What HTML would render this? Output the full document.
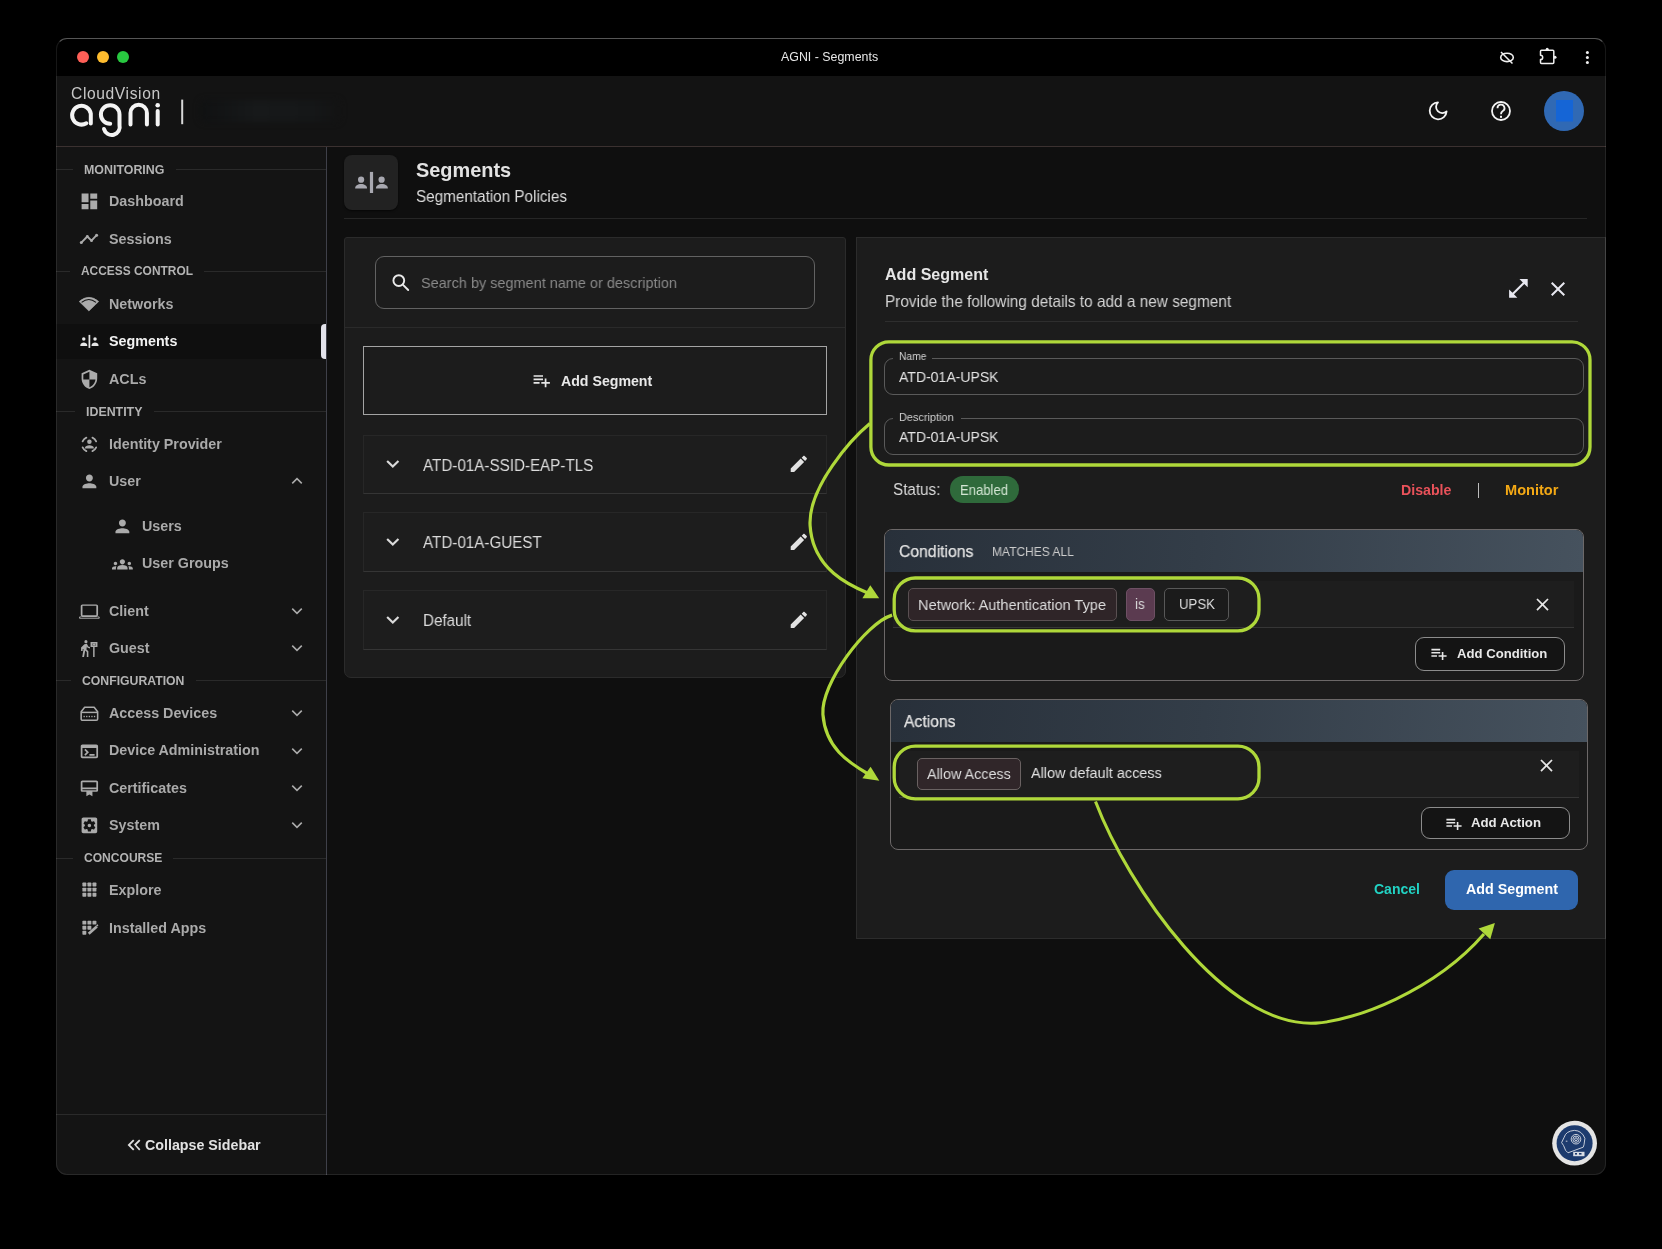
<!DOCTYPE html>
<html><head><meta charset="utf-8">
<style>
*{box-sizing:border-box;margin:0;padding:0}
html,body{width:1662px;height:1249px;overflow:hidden;background:#000;font-family:"Liberation Sans",sans-serif}
.a{position:absolute}
.t{position:absolute;white-space:nowrap;line-height:1;will-change:transform}
.b{font-weight:bold}
#clip{position:absolute;left:0;top:0;width:1662px;height:1249px;clip-path:inset(38px 56px 74px 56px round 11px);background:#0f0f0f}
svg{position:absolute;overflow:visible}
.nav{font-weight:bold;font-size:14.3px;color:#aaaaaa}
.sec{font-weight:bold;font-size:12.2px;color:#b4b4b4}
.ln{position:absolute;height:1px;background:#2a2a2a}
.ic{fill:#b4b4b4}
.chev{fill:none;stroke:#b4b4b4;stroke-width:1.6}
</style></head><body>
<div id="clip">
 <!-- title bar -->
 <div class="a" style="left:56px;top:38px;width:1550px;height:38px;background:#000"></div>
 <div class="a" style="left:77px;top:50.5px;width:12px;height:12px;border-radius:50%;background:#fe5f57"></div>
 <div class="a" style="left:97px;top:50.5px;width:12px;height:12px;border-radius:50%;background:#febc2e"></div>
 <div class="a" style="left:117px;top:50.5px;width:12px;height:12px;border-radius:50%;background:#28c840"></div>
 <div class="t" style="left:781px;top:51px;font-size:12.4px;color:#e8e8e8">AGNI - Segments</div>
 <!-- title bar icons -->
 <svg style="left:0;top:0" width="1" height="1">
  <g fill="none" stroke="#f0f0f0" stroke-width="1.3">
   <ellipse cx="1507" cy="57.4" rx="6.3" ry="4.2" stroke-width="1.6"/>
   <line x1="1501" y1="52" x2="1512.5" y2="63.5" stroke-width="1.5"/>
   <path d="M1541.5 50.3 H1552.8 Q1553.8 50.3 1553.8 51.3 V62.6 Q1553.8 63.6 1552.8 63.6 H1541.5 Q1540.5 63.6 1540.5 62.6 V59.6 A2.2 2.2 0 0 0 1540.5 55.2 V51.3 Q1540.5 50.3 1541.5 50.3 Z" stroke-width="1.5" stroke-linejoin="round"/><circle cx="1547.2" cy="49.2" r="1.5" fill="#f0f0f0" stroke="none"/><circle cx="1555" cy="57.2" r="1.5" fill="#f0f0f0" stroke="none"/>
  </g>
  <circle cx="1587.4" cy="52.6" r="1.5" fill="#f0f0f0"/><circle cx="1587.4" cy="57.5" r="1.5" fill="#f0f0f0"/><circle cx="1587.4" cy="62.5" r="1.5" fill="#f0f0f0"/>
 </svg>
 <!-- header -->
 <div class="a" style="left:56px;top:76px;width:1550px;height:71px;background:#131313;border-bottom:1px solid #3b3130"></div>
 <!-- blurred org name -->
 <div class="a" style="left:200px;top:100px;width:140px;height:22px;background:linear-gradient(90deg,#101112,#17191a 40%,#151718 80%,#131313);filter:blur(3px);border-radius:5px"></div>
 <!-- logo -->
 <div class="t" style="left:70.5px;top:85.8px;font-size:15.6px;color:#c8c8c8;letter-spacing:0.62px">CloudVision</div>
 <svg style="left:0;top:0" width="1" height="1">
  <g fill="none" stroke="#f4f4f4" stroke-width="4" stroke-linecap="round">
   <path d="M86.3 123.3 A9.4 9.4 0 1 1 90.8 113.6 L90.8 123.6"/>
   <path d="M119.5 114.5 A9.3 9.3 0 1 0 110.2 123.8 M119.5 114.5 V125 A8 8 0 0 1 104 129"/>
   <path d="M130.5 124.5 V113 A8.2 8.2 0 0 1 146.9 113 V124.5"/>
   <path d="M157.7 111 V124.5"/>
  </g>
  <circle cx="157.7" cy="105.2" r="2.3" fill="#f4f4f4"/>
  <rect x="181.2" y="99.6" width="2" height="24.6" fill="#d8d8d8"/>
 </svg>
 <!-- header right icons -->
 <svg style="left:0;top:0" width="1" height="1">
  <path d="M1438 102.4 A8.45 8.45 0 1 0 1446.6 111.4 A6.2 6.2 0 0 1 1438 102.4Z" fill="none" stroke="#f4f4f4" stroke-width="1.8" stroke-linejoin="round"/>
  <circle cx="1501" cy="111" r="9" fill="none" stroke="#f4f4f4" stroke-width="1.8"/>
  <path d="M1497.5 108.3 A3.5 3.5 0 1 1 1502.5 111.3 Q1501 112.3 1501 114.3" fill="none" stroke="#f4f4f4" stroke-width="1.8"/>
  <rect x="1500" y="115.8" width="2" height="2" fill="#f4f4f4"/>
  <circle cx="1564" cy="111" r="20" fill="#3069b4"/>
  <rect x="1556" y="100" width="17" height="21.5" fill="#1565d6"/>
 </svg>
 <!-- sidebar -->
 <div class="a" style="left:56px;top:147px;width:270px;height:1028px;background:#141414"></div>
 <div class="a" style="left:326px;top:147px;width:1.2px;height:1028px;background:#3f4049"></div>
<div class="ln" style="left:56px;top:168.9px;width:17.0px"></div>
<div class="ln" style="left:175.5px;top:168.9px;width:150.5px"></div>
<div class="t sec" style="left:83.6px;top:163.5px;font-size:12.41px">MONITORING</div>
<svg class="a" style="left:78.6px;top:191.2px" width="20.8" height="20.8" viewBox="0 0 24 24" fill="#ababab"><path d="M3 13h8V3H3v10zm0 8h8v-6H3v6zm10 0h8V11h-8v10zm0-18v6h8V3h-8z"/></svg>
<div class="t nav" style="left:108.7px;top:193.8px;color:#aaaaaa">Dashboard</div>
<svg class="a" style="left:0;top:0" width="1" height="1"><path d="M81.3 242.6 L87.3 236.5 L91.5 240.7 L96.6 235.2" fill="none" stroke="#ababab" stroke-width="1.9" stroke-linejoin="round"/><circle cx="81.3" cy="242.6" r="1.5" fill="#ababab"/><circle cx="87.3" cy="236.5" r="1.4" fill="#ababab"/><circle cx="91.5" cy="240.7" r="1.4" fill="#ababab"/><circle cx="96.6" cy="235.2" r="1.5" fill="#ababab"/></svg>
<div class="t nav" style="left:108.7px;top:231.8px;color:#aaaaaa">Sessions</div>
<div class="ln" style="left:56px;top:270.9px;width:14.0px"></div>
<div class="ln" style="left:204.0px;top:270.9px;width:122.0px"></div>
<div class="t sec" style="left:80.7px;top:265.7px;font-size:11.93px">ACCESS CONTROL</div>
<svg class="a" style="left:0;top:0" width="1" height="1"><path d="M79.2 301.5 Q88.9 293.2 98.7 301.5 L88.9 311 Z" fill="#ababab" stroke="#ababab" stroke-width="0.6" stroke-linejoin="round"/><path d="M81.6 302.4 Q88.8 296.6 96 302.4" fill="none" stroke="#141414" stroke-width="1.2"/></svg>
<div class="t nav" style="left:108.7px;top:296.9px;color:#aaaaaa">Networks</div>
<div class="a" style="left:56px;top:324px;width:270px;height:34.5px;background:#0f0f0f"></div>
<div class="a" style="left:320.8px;top:324px;width:5.5px;height:35px;background:#e2e2ea;border-radius:4px 0 0 4px"></div>
<svg class="a" style="left:78.6px;top:331.2px" width="20.8" height="20.8" viewBox="0 0 24 24" fill="#e6e6e6"><rect x="11" y="4.5" width="2" height="15"/><circle cx="5.5" cy="9.3" r="2"/><path d="M1.5 16.5c0-2 2.2-3.2 4-3.2s4 1.2 4 3.2v.8h-8z"/><circle cx="18.5" cy="9.3" r="2"/><path d="M14.5 16.5c0-2 2.2-3.2 4-3.2s4 1.2 4 3.2v.8h-8z"/></svg>
<div class="t nav" style="left:108.7px;top:333.9px;color:#f2f2f2">Segments</div>
<svg class="a" style="left:78.6px;top:369.4px" width="20.8" height="20.8" viewBox="0 0 24 24" fill="#ababab"><path d="M12 1L3 5v6c0 5.55 3.84 10.74 9 12 5.16-1.26 9-6.45 9-12V5l-9-4zm0 10.99h7c-.53 4.12-3.28 7.79-7 8.94V12H5V6.3l7-3.11v8.8z"/></svg>
<div class="t nav" style="left:108.7px;top:372.1px;color:#aaaaaa">ACLs</div>
<div class="ln" style="left:56px;top:411.1px;width:19.0px"></div>
<div class="ln" style="left:154.0px;top:411.1px;width:172.0px"></div>
<div class="t sec" style="left:86.0px;top:405.7px;font-size:12.4px">IDENTITY</div>
<svg class="a" style="left:78.6px;top:434.4px" width="20.8" height="20.8" viewBox="0 0 24 24" fill="#ababab"><circle cx="12" cy="8.85" r="2.6"/><path d="M6.8 16.2c0-2 3-3.2 5.2-3.2s5.2 1.2 5.2 3.2v.6H6.8z"/><path d="M4.2 8.5A8.6 8.6 0 0 1 8.5 4.2M15.5 4.2A8.6 8.6 0 0 1 19.8 8.5M19.8 15.5A8.6 8.6 0 0 1 15.5 19.8M8.5 19.8A8.6 8.6 0 0 1 4.2 15.5" fill="none" stroke="#ababab" stroke-width="2.1" stroke-linecap="round"/></svg>
<div class="t nav" style="left:108.7px;top:437.1px;color:#aaaaaa">Identity Provider</div>
<svg class="a" style="left:78.6px;top:471.2px" width="20.8" height="20.8" viewBox="0 0 24 24" fill="#ababab"><path d="M12 12c2.21 0 4-1.79 4-4s-1.79-4-4-4-4 1.79-4 4 1.79 4 4 4zm0 2c-2.67 0-8 1.34-8 4v2h16v-2c0-2.66-5.33-4-8-4z"/></svg>
<div class="t nav" style="left:108.7px;top:473.9px;color:#aaaaaa">User</div>
<svg class="a" style="left:286px;top:470.0px" width="22" height="22" viewBox="0 0 24 24"><path d="M6.8 14.6L12 9.4l5.2 5.2" fill="none" stroke="#ababab" stroke-width="1.7"/></svg>
<svg class="a" style="left:111.6px;top:516.2px" width="20.8" height="20.8" viewBox="0 0 24 24" fill="#ababab"><path d="M12 12c2.21 0 4-1.79 4-4s-1.79-4-4-4-4 1.79-4 4 1.79 4 4 4zm0 2c-2.67 0-8 1.34-8 4v2h16v-2c0-2.66-5.33-4-8-4z"/></svg>
<div class="t nav" style="left:141.6px;top:518.9px">Users</div>
<svg class="a" style="left:111.6px;top:553.7px" width="20.8" height="20.8" viewBox="0 0 24 24" fill="#ababab"><path d="M12 12.75c1.63 0 3.07.39 4.24.9 1.08.48 1.76 1.56 1.76 2.73V18H6v-1.61c0-1.18.68-2.26 1.76-2.73 1.17-.52 2.61-.91 4.24-.91zM4 13c1.1 0 2-.9 2-2s-.9-2-2-2-2 .9-2 2 .9 2 2 2zm1.13 1.1c-.37-.06-.74-.1-1.13-.1-.99 0-1.930.21-2.78.58C.48 14.9 0 15.62 0 16.43V18h4.5v-1.61c0-.83.23-1.61.63-2.290zM20 13c1.1 0 2-.9 2-2s-.9-2-2-2-2 .9-2 2 .9 2 2 2zm4 3.43c0-.81-.48-1.53-1.22-1.85-.85-.37-1.79-.58-2.78-.58-.39 0-.76.04-1.13.1.4.68.63 1.46.63 2.29V18H24v-1.57zM12 6c1.66 0 3 1.34 3 3s-1.34 3-3 3-3-1.340-3-3 1.34-3 3-3z"/></svg>
<div class="t nav" style="left:141.6px;top:556.4px">User Groups</div>
<svg class="a" style="left:78.6px;top:601.2px" width="20.8" height="20.8" viewBox="0 0 24 24" fill="#ababab"><path d="M20 18c1.1 0 2-.9 2-2V6c0-1.1-.9-2-2-2H4c-1.1 0-2 .9-2 2v10c0 1.1.9 2 2 2H1.5c-.8 0-1.5.7-1.5 1.2S.7 20.5 1.5 20.5h21c.8 0 1.5-.7 1.5-1.2S23.3 18 22.5 18H20zM4 5.5h16v11H4v-11z" fill-rule="evenodd"/><rect x="1.5" y="18.8" width="21" height="0.9" fill="#141414"/></svg>
<div class="t nav" style="left:108.7px;top:603.9px;color:#aaaaaa">Client</div>
<svg class="a" style="left:286px;top:600.0px" width="22" height="22" viewBox="0 0 24 24"><path d="M6.8 9.4L12 14.6l5.2-5.2" fill="none" stroke="#ababab" stroke-width="1.7"/></svg>
<svg class="a" style="left:78.6px;top:638.2px" width="20.8" height="20.8" viewBox="0 0 24 24" fill="#ababab"><circle cx="8" cy="4.2" r="1.8"/><path d="M6.2 7.2l2.9-.6 1.6 3.1 2 .8v1.7l-2.8-1-.8-1.3-.5 3.3 2.2 2.2V22H9v-5.7l-1.8-1.8-1.4 7.5H3.7l1.6-9.4-1.1.5V15H2.4v-4.1z"/><path d="M13.3 4.7h8v5.8h-3.3V22h-1.7V10.5h-3z"/><rect x="15.6" y="6.3" width="3.5" height="2.5" fill="#141414"/><rect x="16.7" y="5.6" width="1.3" height="3.9"/><rect x="15.9" y="6.9" width="2.9" height="1.3"/></svg>
<div class="t nav" style="left:108.7px;top:640.9px;color:#aaaaaa">Guest</div>
<svg class="a" style="left:286px;top:637.0px" width="22" height="22" viewBox="0 0 24 24"><path d="M6.8 9.4L12 14.6l5.2-5.2" fill="none" stroke="#ababab" stroke-width="1.7"/></svg>
<div class="ln" style="left:56px;top:680.1px;width:14.6px"></div>
<div class="ln" style="left:196.0px;top:680.1px;width:130.0px"></div>
<div class="t sec" style="left:81.8px;top:674.8px;font-size:12.24px">CONFIGURATION</div>
<svg class="a" style="left:78.6px;top:703.3px" width="20.8" height="20.8" viewBox="0 0 24 24" fill="#ababab"><path d="M6.5 5h11l4 5v8.5c0 .8-.7 1.5-1.5 1.5H4c-.8 0-1.5-.7-1.5-1.5V10z" fill="none" stroke="#ababab" stroke-width="1.8" stroke-linejoin="round"/><rect x="2.5" y="10" width="19" height="1.7"/><rect x="5.2" y="14.8" width="1.5" height="1.6"/><rect x="8.2" y="14.8" width="1.5" height="1.6"/><rect x="11.2" y="14.8" width="1.5" height="1.6"/><rect x="14.2" y="14.8" width="1.5" height="1.6"/><rect x="17.2" y="14.8" width="1.5" height="1.6"/></svg>
<div class="t nav" style="left:108.7px;top:706.0px;color:#aaaaaa">Access Devices</div>
<svg class="a" style="left:286px;top:702.1px" width="22" height="22" viewBox="0 0 24 24"><path d="M6.8 9.4L12 14.6l5.2-5.2" fill="none" stroke="#ababab" stroke-width="1.7"/></svg>
<svg class="a" style="left:78.6px;top:740.7px" width="20.8" height="20.8" viewBox="0 0 24 24" fill="#ababab"><path d="M20 4H4c-1.11 0-2 .9-2 2v12c0 1.1.89 2 2 2h16c1.1 0 2-.9 2-2V6c0-1.1-.89-2-2-2zm0 14H4V8h16v10zm-2-1h-6v-2h6v2zM7.5 17l-1.41-1.41L8.67 13l-2.59-2.59L7.5 9l4 4-4 4z"/></svg>
<div class="t nav" style="left:108.7px;top:743.4px;color:#aaaaaa">Device Administration</div>
<svg class="a" style="left:286px;top:739.5px" width="22" height="22" viewBox="0 0 24 24"><path d="M6.8 9.4L12 14.6l5.2-5.2" fill="none" stroke="#ababab" stroke-width="1.7"/></svg>
<svg class="a" style="left:78.6px;top:778.2px" width="20.8" height="20.8" viewBox="0 0 24 24" fill="#ababab"><path d="M4 3h16c1.1 0 2 .9 2 2v9c0 1.1-.9 2-2 2h-4.5v5l-3.5-2-3.5 2v-5H4c-1.1 0-2-.9-2-2V5c0-1.1.9-2 2-2zm0 2v6h16V5H4zm0 8v1h16v-1H4z" fill-rule="evenodd"/></svg>
<div class="t nav" style="left:108.7px;top:780.9px;color:#aaaaaa">Certificates</div>
<svg class="a" style="left:286px;top:777.0px" width="22" height="22" viewBox="0 0 24 24"><path d="M6.8 9.4L12 14.6l5.2-5.2" fill="none" stroke="#ababab" stroke-width="1.7"/></svg>
<svg class="a" style="left:78.6px;top:815.4px" width="20.8" height="20.8" viewBox="0 0 24 24" fill="#ababab"><path d="M12 10c-1.1 0-2 .9-2 2s.9 2 2 2 2-.9 2-2-.9-2-2-2zm7-7H5c-1.11 0-2 .9-2 2v14c0 1.1.89 2 2 2h14c1.11 0 2-.9 2-2V5c0-1.1-.89-2-2-2zm-1.75 9c0 .23-.02.46-.05.68l1.48 1.16c.13.11.17.3.08.45l-1.4 2.42c-.09.15-.27.21-.43.15l-1.74-.7c-.36.28-.76.51-1.18.69l-.26 1.85c-.03.17-.18.3-.35.3h-2.8c-.17 0-.32-.13-.35-.29l-.26-1.85c-.43-.18-.82-.41-1.18-.69l-1.74.7c-.16.06-.34 0-.43-.15l-1.4-2.42c-.09-.15-.05-.34.08-.45l1.48-1.16c-.03-.23-.05-.46-.05-.69 0-.23.02-.46.05-.68l-1.48-1.16c-.13-.11-.17-.3-.08-.45l1.4-2.42c.09-.15.27-.21.43-.15l1.74.7c.36-.28.76-.51 1.18-.69l.26-1.85c.03-.17.18-.3.35-.3h2.8c.17 0 .32.13.35.29l.26 1.85c.43.18.82.41 1.18.69l1.74-.7c.16-.06.34 0 .43.15l1.4 2.42c.09.15.05.34-.08.45l-1.48 1.16c.03.23.05.46.05.69z"/></svg>
<div class="t nav" style="left:108.7px;top:818.1px;color:#aaaaaa">System</div>
<svg class="a" style="left:286px;top:814.2px" width="22" height="22" viewBox="0 0 24 24"><path d="M6.8 9.4L12 14.6l5.2-5.2" fill="none" stroke="#ababab" stroke-width="1.7"/></svg>
<div class="ln" style="left:56px;top:857.5px;width:16.8px"></div>
<div class="ln" style="left:173.0px;top:857.5px;width:153.0px"></div>
<div class="t sec" style="left:84.0px;top:852.3px;font-size:12.07px">CONCOURSE</div>
<svg class="a" style="left:78.6px;top:880.4px" width="20.8" height="20.8" viewBox="0 0 24 24" fill="#ababab"><rect x="3.92" y="3.0" width="4.5" height="4.5" rx="0.8"/><rect x="9.75" y="3.0" width="4.5" height="4.5" rx="0.8"/><rect x="15.58" y="3.0" width="4.5" height="4.5" rx="0.8"/><rect x="3.92" y="8.85" width="4.5" height="4.5" rx="0.8"/><rect x="9.75" y="8.85" width="4.5" height="4.5" rx="0.8"/><rect x="15.58" y="8.85" width="4.5" height="4.5" rx="0.8"/><rect x="3.92" y="14.7" width="4.5" height="4.5" rx="0.8"/><rect x="9.75" y="14.7" width="4.5" height="4.5" rx="0.8"/><rect x="15.58" y="14.7" width="4.5" height="4.5" rx="0.8"/></svg>
<div class="t nav" style="left:108.7px;top:883.1px;color:#aaaaaa">Explore</div>
<svg class="a" style="left:78.6px;top:918.3px" width="20.8" height="20.8" viewBox="0 0 24 24" fill="#ababab"><rect x="3.92" y="3.1" width="4.5" height="4.5" rx="0.8"/><rect x="9.75" y="3.1" width="4.5" height="4.5" rx="0.8"/><rect x="15.58" y="3.1" width="4.5" height="4.5" rx="0.8"/><rect x="3.92" y="8.95" width="4.5" height="4.5" rx="0.8"/><rect x="9.75" y="8.95" width="4.5" height="4.5" rx="0.8"/><rect x="3.92" y="14.8" width="4.5" height="4.5" rx="0.8"/><path d="M11.2 18.1 L20.6 9.8" stroke="#ababab" stroke-width="3.2" stroke-linecap="butt"/><path d="M19.6 8.6 L21.2 7.2 L22.4 8.4 L21.4 9.9 Z"/></svg>
<div class="t nav" style="left:108.7px;top:921.0px;color:#aaaaaa">Installed Apps</div>
<div class="ln" style="left:56px;top:1113.5px;width:270px"></div>
<svg class="a" style="left:123px;top:1134px" width="22" height="22" viewBox="0 0 24 24" fill="#e0e0e0"><path d="M17.59 18L19 16.59 14.42 12 19 7.41 17.59 6 12 11.59 17.59 18zM11 18l1.41-1.41L7.83 12l4.58-4.59L11 6l-6 6 6 6z"/></svg>
<div class="t b" style="left:145px;top:1137.9px;font-size:14.25px;color:#e2e2e2">Collapse Sidebar</div>
<div class="a" style="left:344.0px;top:155.0px;width:54.0px;height:54.6px;background:#222;border-radius:8px;box-shadow:0 1px 2px rgba(0,0,0,.6)"></div>
<svg class="a" style="left:0;top:0" width="1" height="1"><g fill="#a8a8b0"><rect x="369.9" y="171.9" width="3.2" height="21.1"/><circle cx="361.1" cy="179.7" r="3.1"/><path d="M355.1 188.4c0-2.6 2.7-4.4 6-4.4s6 1.8 6 4.4z"/><circle cx="381.6" cy="179.7" r="3.1"/><path d="M375.9 188.4c0-2.6 2.7-4.4 6-4.4s6 1.8 6 4.4z"/></g></svg>
<div class="t b" style="left:416.3px;top:161.05px;font-size:19.90px;color:#e2e2e2;">Segments</div>
<div class="t" style="left:416.3px;top:187.51px;font-size:16.18px;color:#dcdcdc;transform:scaleX(0.9434);transform-origin:0 0;">Segmentation Policies</div>
<div class="a" style="left:344.0px;top:218.0px;width:1243.0px;height:1.0px;background:#262626"></div>
<div class="a" style="left:344.0px;top:237.0px;width:502.0px;height:441.0px;background:#1c1c1c;border:1px solid #2b2b2b;border-radius:3px 3px 7px 7px"></div>
<div class="a" style="left:375.0px;top:256.0px;width:440.0px;height:52.6px;border:1px solid #626262;border-radius:9px"></div>
<svg class="a" style="left:0;top:0" width="1" height="1"><g fill="none" stroke="#eaeaea" stroke-width="1.9"><circle cx="398.8" cy="280.6" r="5.4"/><path d="M402.8 284.6L408.2 290" stroke-linecap="round"/></g></svg>
<div class="t" style="left:421.3px;top:274.83px;font-size:15.35px;color:#8a8a8a;transform:scaleX(0.9434);transform-origin:0 0;">Search by segment name or description</div>
<div class="a" style="left:345.0px;top:327.0px;width:500.0px;height:1.0px;background:#2a2a2a"></div>
<div class="a" style="left:363.0px;top:346.3px;width:464.0px;height:69.2px;border:1.5px solid #a4a4a4"></div>
<svg class="a" style="left:531.1px;top:369.9px" width="20.6" height="20.6" viewBox="0 0 24 24" fill="#e6e6e6"><path d="M14 10H3v2h11v-2zm0-4H3v2h11V6zm4 8v-4h-2v4h-4v2h4v4h2v-4h4v-2h-4zM3 16h7v-2H3v2z"/></svg>
<div class="t b" style="left:561.3px;top:374.42px;font-size:14.17px;color:#e8e8e8;">Add Segment</div>
<div class="a" style="left:363.0px;top:434.5px;width:464.0px;height:59.7px;border:1px solid #272727;border-bottom-color:#353535;background:#1d1d1d"></div>
<svg class="a" style="left:380.3px;top:451.1px" width="25.6" height="25.6" viewBox="0 0 24 24" fill="#dadada"><path d="M16.59 8.59L12 13.17 7.41 8.59 6 10l6 6 6-6z"/></svg>
<div class="t" style="left:422.7px;top:456.53px;font-size:16.13px;color:#dcdcdc;transform:scaleX(0.9434);transform-origin:0 0;">ATD-01A-SSID-EAP-TLS</div>
<svg class="a" style="left:787.9px;top:453.3px" width="21.7" height="21.7" viewBox="0 0 24 24" fill="#e2e2e2"><path d="M3 17.25V21h3.75L17.81 9.94l-3.75-3.75L3 17.25zM20.71 7.04c.39-.39.39-1.02 0-1.41l-2.34-2.34c-.39-.39-1.02-.39-1.41 0l-1.83 1.83 3.75 3.75 1.83-1.83z"/></svg>
<div class="a" style="left:363.0px;top:512.4px;width:464.0px;height:59.7px;border:1px solid #272727;border-bottom-color:#353535;background:#1d1d1d"></div>
<svg class="a" style="left:380.3px;top:529.0px" width="25.6" height="25.6" viewBox="0 0 24 24" fill="#dadada"><path d="M16.59 8.59L12 13.17 7.41 8.59 6 10l6 6 6-6z"/></svg>
<div class="t" style="left:422.7px;top:534.43px;font-size:16.13px;color:#dcdcdc;transform:scaleX(0.9434);transform-origin:0 0;">ATD-01A-GUEST</div>
<svg class="a" style="left:787.9px;top:531.2px" width="21.7" height="21.7" viewBox="0 0 24 24" fill="#e2e2e2"><path d="M3 17.25V21h3.75L17.81 9.94l-3.75-3.75L3 17.25zM20.71 7.04c.39-.39.39-1.02 0-1.41l-2.34-2.34c-.39-.39-1.02-.39-1.41 0l-1.83 1.83 3.75 3.75 1.83-1.83z"/></svg>
<div class="a" style="left:363.0px;top:590.3px;width:464.0px;height:59.7px;border:1px solid #272727;border-bottom-color:#353535;background:#1d1d1d"></div>
<svg class="a" style="left:380.3px;top:606.9px" width="25.6" height="25.6" viewBox="0 0 24 24" fill="#dadada"><path d="M16.59 8.59L12 13.17 7.41 8.59 6 10l6 6 6-6z"/></svg>
<div class="t" style="left:422.7px;top:612.33px;font-size:16.13px;color:#dcdcdc;transform:scaleX(0.9434);transform-origin:0 0;">Default</div>
<svg class="a" style="left:787.9px;top:609.1px" width="21.7" height="21.7" viewBox="0 0 24 24" fill="#e2e2e2"><path d="M3 17.25V21h3.75L17.81 9.94l-3.75-3.75L3 17.25zM20.71 7.04c.39-.39.39-1.02 0-1.41l-2.34-2.34c-.39-.39-1.02-.39-1.41 0l-1.83 1.83 3.75 3.75 1.83-1.83z"/></svg>
<div class="a" style="left:856.0px;top:237.0px;width:750.0px;height:701.6px;background:#1c1c1c;border:1px solid #2c2c2c;border-right-color:#333"></div>
<div class="t b" style="left:884.5px;top:266.27px;font-size:16.06px;color:#e6e6e6;">Add Segment</div>
<div class="t" style="left:884.5px;top:292.64px;font-size:16.31px;color:#d4d4d4;transform:scaleX(0.9434);transform-origin:0 0;">Provide the following details to add a new segment</div>
<svg class="a" style="left:1505.7px;top:276.3px" width="24.8" height="24.8" viewBox="0 0 24 24" fill="#e8e8f0"><path d="M21 11V3h-8l3.29 3.29-10 10L3 13v8h8l-3.29-3.29 10-10z"/></svg>
<svg class="a" style="left:1546.0px;top:277.0px" width="24.0" height="24.0" viewBox="0 0 24 24" fill="#e8e8f0"><path d="M19 6.41L17.59 5 12 10.59 6.41 5 5 6.41 10.59 12 5 17.59 6.41 19 12 13.41 17.59 19 19 17.59 13.41 12z"/></svg>
<div class="a" style="left:884.5px;top:321.0px;width:693.5px;height:1.0px;background:#2e2e2e"></div>
<div class="a" style="left:884.0px;top:357.8px;width:700.0px;height:36.8px;border:1px solid #5a5a5a;border-radius:9px"></div>
<div class="a" style="left:893.0px;top:356.8px;width:39.0px;height:3.0px;background:#1c1c1c"></div>
<div class="t" style="left:898.5px;top:350.86px;font-size:10.89px;color:#d0d0d0;transform:scaleX(0.9434);transform-origin:0 0;">Name</div>
<div class="t" style="left:898.5px;top:369.76px;font-size:14.88px;color:#e4e4e4;transform:scaleX(0.9434);transform-origin:0 0;">ATD-01A-UPSK</div>
<div class="a" style="left:884.0px;top:418.3px;width:700.0px;height:36.3px;border:1px solid #5a5a5a;border-radius:9px"></div>
<div class="a" style="left:893.0px;top:417.3px;width:68.0px;height:3.0px;background:#1c1c1c"></div>
<div class="t" style="left:898.5px;top:411.61px;font-size:11.58px;color:#d0d0d0;transform:scaleX(0.9434);transform-origin:0 0;">Description</div>
<div class="t" style="left:898.5px;top:430.01px;font-size:14.88px;color:#e4e4e4;transform:scaleX(0.9434);transform-origin:0 0;">ATD-01A-UPSK</div>
<div class="t" style="left:893.3px;top:481.92px;font-size:16.75px;color:#dadada;transform:scaleX(0.9091);transform-origin:0 0;">Status:</div>
<div class="a" style="left:950.0px;top:476.2px;width:69.0px;height:26.6px;background:#2f6a3b;border-radius:13px"></div>
<div class="t" style="left:960.2px;top:483.77px;font-size:13.86px;color:#d4e6d4;transform:scaleX(0.9434);transform-origin:0 0;">Enabled</div>
<div class="t b" style="left:1400.9px;top:483.22px;font-size:14.17px;color:#e9525a;">Disable</div>
<div class="a" style="left:1478.0px;top:482.5px;width:1.3px;height:15.0px;background:#bdbdbd"></div>
<div class="t b" style="left:1505.3px;top:483.01px;font-size:14.57px;color:#f4a915;">Monitor</div>
<div class="a" style="left:884.4px;top:529.2px;width:699.2px;height:151.4px;background:#1a1a1a;border:1px solid #6c6868;border-radius:8px;overflow:hidden"></div>
<div class="a" style="left:885.4px;top:530.2px;width:697.2px;height:42.0px;background:linear-gradient(95deg,#28303a 0%,#333d48 45%,#46525e 100%);border-radius:7px 7px 0 0"></div>
<div class="t" style="left:898.8px;top:544.15px;font-size:16.70px;color:#e2e2e2;transform:scaleX(0.9434);transform-origin:0 0;-webkit-text-stroke:0.25px #e2e2e2;">Conditions</div>
<div class="t" style="left:992.0px;top:546.24px;font-size:12.72px;color:#cccccc;transform:scaleX(0.9434);transform-origin:0 0;">MATCHES ALL</div>
<div class="a" style="left:893.4px;top:581.0px;width:680.7px;height:46.5px;background:#1e1e1e;border-bottom:1px solid #363636"></div>
<div class="a" style="left:907.7px;top:588.3px;width:209.0px;height:32.3px;background:#2f2528;border:1px solid #5a5052;border-radius:5px"></div>
<div class="t" style="left:918.1px;top:596.54px;font-size:15.41px;color:#dcdcdc;transform:scaleX(0.9434);transform-origin:0 0;">Network: Authentication Type</div>
<div class="a" style="left:1126.0px;top:588.3px;width:29.0px;height:32.3px;background:#5b3b50;border:1px solid #6e5064;border-radius:5px"></div>
<div class="t" style="left:1135.2px;top:597.21px;font-size:14.09px;color:#dcdcdc;transform:scaleX(0.9434);transform-origin:0 0;">is</div>
<div class="a" style="left:1164.0px;top:588.3px;width:65.0px;height:32.3px;background:#1b1b1b;border:1px solid #585858;border-radius:5px"></div>
<div class="t" style="left:1178.5px;top:597.24px;font-size:14.01px;color:#dcdcdc;transform:scaleX(0.9434);transform-origin:0 0;">UPSK</div>
<svg class="a" style="left:1531.5px;top:593.5px" width="21.0" height="21.0" viewBox="0 0 24 24" fill="#e6e6e6"><path d="M19 6.41L17.59 5 12 10.59 6.41 5 5 6.41 10.59 12 5 17.59 6.41 19 12 13.41 17.59 19 19 17.59 13.41 12z"/></svg>
<div class="a" style="left:1415.0px;top:637.4px;width:149.5px;height:33.2px;background:#141414;border:1px solid #8c8c8c;border-radius:9px"></div>
<svg class="a" style="left:1429.1px;top:644.1px" width="19.2" height="19.2" viewBox="0 0 24 24" fill="#e6e6e6"><path d="M14 10H3v2h11v-2zm0-4H3v2h11V6zm4 8v-4h-2v4h-4v2h4v4h2v-4h4v-2h-4zM3 16h7v-2H3v2z"/></svg>
<div class="t b" style="left:1456.8px;top:646.83px;font-size:13.13px;color:#e8e8e8;">Add Condition</div>
<div class="a" style="left:889.7px;top:699.4px;width:698.7px;height:150.4px;background:#1a1a1a;border:1px solid #6c6868;border-radius:8px;overflow:hidden"></div>
<div class="a" style="left:890.7px;top:700.4px;width:696.7px;height:42.0px;background:linear-gradient(95deg,#28303a 0%,#333d48 45%,#46525e 100%);border-radius:7px 7px 0 0"></div>
<div class="t" style="left:904.1px;top:714.38px;font-size:16.64px;color:#e2e2e2;transform:scaleX(0.9434);transform-origin:0 0;-webkit-text-stroke:0.25px #e2e2e2;">Actions</div>
<div class="a" style="left:898.7px;top:751.0px;width:680.2px;height:46.5px;background:#1e1e1e;border-bottom:1px solid #363636"></div>
<div class="a" style="left:917.4px;top:757.5px;width:103.5px;height:32.1px;background:#302629;border:1px solid #6a6262;border-radius:5px"></div>
<div class="t" style="left:927.0px;top:765.74px;font-size:15.22px;color:#dcdcdc;transform:scaleX(0.9434);transform-origin:0 0;">Allow Access</div>
<div class="t" style="left:1031.0px;top:765.25px;font-size:15.30px;color:#e2e2e2;transform:scaleX(0.9434);transform-origin:0 0;">Allow default access</div>
<svg class="a" style="left:1536.2px;top:754.7px" width="21.0" height="21.0" viewBox="0 0 24 24" fill="#e6e6e6"><path d="M19 6.41L17.59 5 12 10.59 6.41 5 5 6.41 10.59 12 5 17.59 6.41 19 12 13.41 17.59 19 19 17.59 13.41 12z"/></svg>
<div class="a" style="left:1420.5px;top:807.4px;width:149.3px;height:32.1px;background:#141414;border:1px solid #8c8c8c;border-radius:9px"></div>
<svg class="a" style="left:1444.3px;top:813.6px" width="19.2" height="19.2" viewBox="0 0 24 24" fill="#e6e6e6"><path d="M14 10H3v2h11v-2zm0-4H3v2h11V6zm4 8v-4h-2v4h-4v2h4v4h2v-4h4v-2h-4zM3 16h7v-2H3v2z"/></svg>
<div class="t b" style="left:1471.4px;top:816.24px;font-size:13.22px;color:#e8e8e8;">Add Action</div>
<div class="t b" style="left:1373.5px;top:882.28px;font-size:14.03px;color:#22d3c4;">Cancel</div>
<div class="a" style="left:1445.0px;top:869.5px;width:132.8px;height:40.7px;background:#2f66ae;border-radius:9px"></div>
<div class="t b" style="left:1465.5px;top:882.46px;font-size:14.28px;color:#ffffff;">Add Segment</div>
<svg class="a" style="left:0;top:0" width="1" height="1"><circle cx="1574.6" cy="1143.2" r="22.4" fill="#e4e4e4"/><circle cx="1574.6" cy="1143.2" r="18" fill="#1d3b6e"/><g fill="none" stroke="#d8dce4" stroke-width="0.9" stroke-linejoin="round"><path d="M1568 1152.8 L1565.6 1150.4 L1563.6 1145.6 L1561.6 1142.6 L1564.2 1137.2 Q1566 1131 1574.4 1130.4 Q1582 1130.6 1584.9 1138.4 L1584 1144.8 L1583.2 1147.2 L1568 1152.8"/><circle cx="1576" cy="1139.2" r="4.8"/><circle cx="1576" cy="1139.2" r="3.1"/><circle cx="1576" cy="1139.2" r="1.4"/><path d="M1565.8 1141.2 h1.6"/></g><rect x="1573.2" y="1151.8" width="11.3" height="4.4" fill="#d8dce4"/><rect x="1575" y="1153" width="2" height="1.6" fill="#1d3b6e"/><rect x="1579" y="1153" width="2.5" height="1.6" fill="#1d3b6e"/></svg>
<svg class="a" style="left:0;top:0" width="1" height="1"><g fill="none" stroke="#afd83a" stroke-width="3.3"><rect x="870.9" y="341.9" width="719.1" height="123.1" rx="18"/><rect x="894.2" y="578" width="364.8" height="52.9" rx="21"/><rect x="894.2" y="746.2" width="364.8" height="52.6" rx="21"/><path d="M869.9 423.6 C852.1 438.3 807.8 487.1 810.1 525.6 C812.8 569.6 850.6 586.0 869.0 593.5" stroke-width="3.2"/><path d="M892.1 615.1 C866.2 622.9 820.6 683.6 822.9 714.4 C825.5 748.0 848.3 762.3 869.0 774.5" stroke-width="3.2"/><path d="M1095.5 801.5 C1127.5 885.7 1225.0 1028.4 1315.9 1023.1 C1354.0 1020.9 1434.0 991.5 1484.0 934.0" stroke-width="3.1"/></g><g fill="#afd83a"><path d="M879.2 598.2 L862.4 598.2 L870.3 585.2 Z"/><path d="M879.3 780.8 L862.4 778.2 L870.6 766.8 Z"/><path d="M1494.9 923 L1478.6 928.6 L1490.3 939.3 Z"/></g></svg>
</div>
<div class="a" style="left:56px;top:38px;width:1550px;height:1137px;border-radius:11px;border:1px solid rgba(255,255,255,0.09);border-top-color:#565656;pointer-events:none"></div>
</body></html>
